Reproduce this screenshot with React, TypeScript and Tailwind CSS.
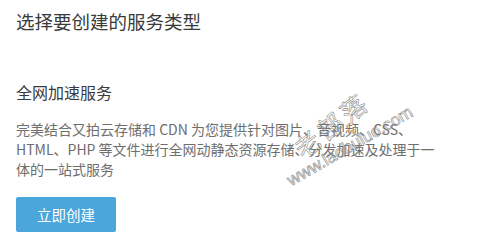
import React from "react";

export default function App() {
  return (
    <div
      className="relative w-[482px] h-[243px] overflow-hidden bg-white px-4 pt-[8px]"
      style={{ fontFamily: '"Noto Sans CJK SC", "Noto Sans", sans-serif' }}
    >
      <h1 className="text-[18.5px] leading-[26px] text-[#3a3a3a] font-normal">选择要创建的服务类型</h1>
      <h2 className="mt-[46px] text-[16px] leading-[24px] text-[#3a3a3a] font-normal">全网加速服务</h2>
      <p className="mt-[15px] w-[426px] text-[14px] leading-[20px] text-[#6e6e6e]">
        完美结合又拍云存储和 CDN 为您提供针对图片、音视频、CSS、HTML、PHP 等文件进行全网动静态资源存储、分发加速及处理于一体的一站式服务
      </p>
      <button className="mt-[18px] flex h-[35px] w-[100px] items-center justify-center rounded-[2px] bg-[#4aa6db] text-[14.5px] text-white">
        立即创建
      </button>

      <svg className="pointer-events-none absolute left-0 top-0" width="482" height="243" viewBox="0 0 482 243">
        <text
          x="331"
          y="124"
          transform="rotate(-38 331 124)"
          textAnchor="middle"
          dominantBaseline="central"
          fontSize="25"
          letterSpacing="4"
          fill="none"
          stroke="#8c8c8c"
          strokeWidth="0.6"
          fontFamily='"Noto Sans CJK SC", sans-serif'
        >
          老部落
        </text>
        <text
          x="350"
          y="146"
          transform="rotate(-30 350 146)"
          textAnchor="middle"
          dominantBaseline="central"
          fontSize="17"
          fill="none"
          stroke="#8c8c8c"
          strokeWidth="0.6"
          fontFamily='"Liberation Sans", sans-serif'
        >
          www.laobuluo.com
        </text>
      </svg>
    </div>
  );
}
